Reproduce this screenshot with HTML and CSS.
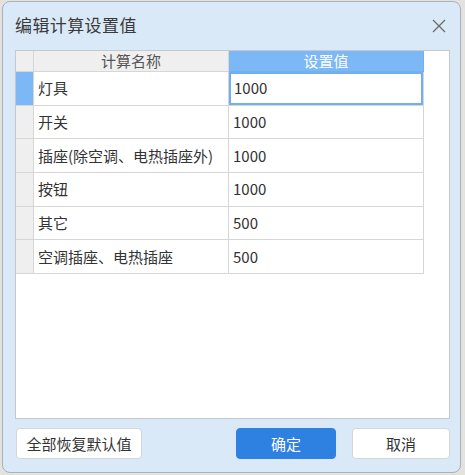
FILE: index.html
```html
<!DOCTYPE html>
<html lang="zh-CN">
<head>
<meta charset="utf-8">
<title>编辑计算设置值</title>
<link rel="stylesheet" href="styles.css">
</head>
<body>
<div class="dialog">
  <div class="titlebar">
    <span class="title">编辑计算设置值</span>
    <svg class="close" width="14" height="14" viewBox="0 0 14 14"><path d="M1 1 L13 13 M13 1 L1 13" stroke="#6b6b6b" stroke-width="1.3" fill="none"/></svg>
  </div>
  <div class="grid-frame">
    <div class="grid">
      <div class="cell corner"></div>
      <div class="cell head">计算名称</div>
      <div class="cell head head-sel">设置值</div>

      <div class="cell rowhead rowhead-sel"></div>
      <div class="cell">灯具</div>
      <div class="cell editing">1000</div>

      <div class="cell rowhead"></div>
      <div class="cell">开关</div>
      <div class="cell">1000</div>

      <div class="cell rowhead"></div>
      <div class="cell">插座(除空调、电热插座外)</div>
      <div class="cell">1000</div>

      <div class="cell rowhead"></div>
      <div class="cell">按钮</div>
      <div class="cell">1000</div>

      <div class="cell rowhead"></div>
      <div class="cell">其它</div>
      <div class="cell">500</div>

      <div class="cell rowhead"></div>
      <div class="cell">空调插座、电热插座</div>
      <div class="cell">500</div>
    </div>
  </div>
  <div class="buttons">
    <button class="btn">全部恢复默认值</button>
    <div class="btn-group">
      <button class="btn btn-primary">确定</button>
      <button class="btn btn-cancel">取消</button>
    </div>
  </div>
</div>
</body>
</html>
```

FILE: styles.css
```css
* { box-sizing: border-box; }
html, body { margin: 0; padding: 0; }
body {
  width: 465px;
  height: 475px;
  background: #e4e2de;
  font-family: "Noto Sans CJK SC", "Noto Sans", sans-serif;
  color: #333;
  overflow: hidden;
}
.dialog {
  margin: 1px 0 0 2px;
  width: 459px;
  height: 472px;
  background: #dae9f7;
  border: 1px solid #a9b2bb;
  border-radius: 8px;
  padding: 0 10px 13px 12px;
  display: flex;
  flex-direction: column;
}
.titlebar {
  height: 48px;
  display: flex;
  align-items: center;
  justify-content: space-between;
  padding-bottom: 2px;
}
.title {
  font-size: 17px;
  line-height: 20px;
  color: #3a3a3a;
  letter-spacing: 0.4px;
}
.close {
  margin-right: 4px;
  margin-top: 1px;
}
.grid-frame {
  flex: 1;
  background: #fff;
  border: 1px solid #c6c9cc;
}
.grid {
  display: grid;
  grid-template-columns: 18px 195px 195px;
  grid-template-rows: 21px repeat(6, 33.67px);
}
.cell {
  border-right: 1px solid #d6d6d6;
  border-bottom: 1px solid #d6d6d6;
  font-size: 15px;
  line-height: 20px;
  padding: 0 4px;
  display: flex;
  align-items: center;
  color: #333;
  white-space: nowrap;
}
.corner, .rowhead {
  background: #efefef;
  padding: 0;
}
.head {
  background: #efefef;
  justify-content: center;
  color: #555;
  font-size: 15px;
  line-height: 18px;
  padding: 0;
}
.head-sel {
  background: #7bb8f5;
  color: #fff;
  border-right-color: #72b0ee;
  border-bottom-color: #72b0ee;
}
.rowhead-sel {
  background: #7bb8f5;
}
.editing {
  box-shadow: inset 0 0 0 2px #70b0f0;
  padding-left: 5px;
}
.buttons {
  margin-top: 9px;
  display: flex;
  justify-content: space-between;
  padding: 0 0 0 1px;
}
.btn-group {
  display: flex;
  gap: 16px;
}
.btn {
  height: 31px;
  font-family: "Noto Sans CJK SC", "Noto Sans", sans-serif;
  font-size: 15px;
  line-height: 18px;
  color: #333;
  background: #fff;
  border: 1px solid #d3d6da;
  border-radius: 4px;
  padding: 0;
  width: 126px;
}
.btn-primary {
  width: 100px;
  background: #2e80e1;
  border-color: #2e80e1;
  color: #fff;
}
.btn-cancel {
  width: 98px;
}
```
